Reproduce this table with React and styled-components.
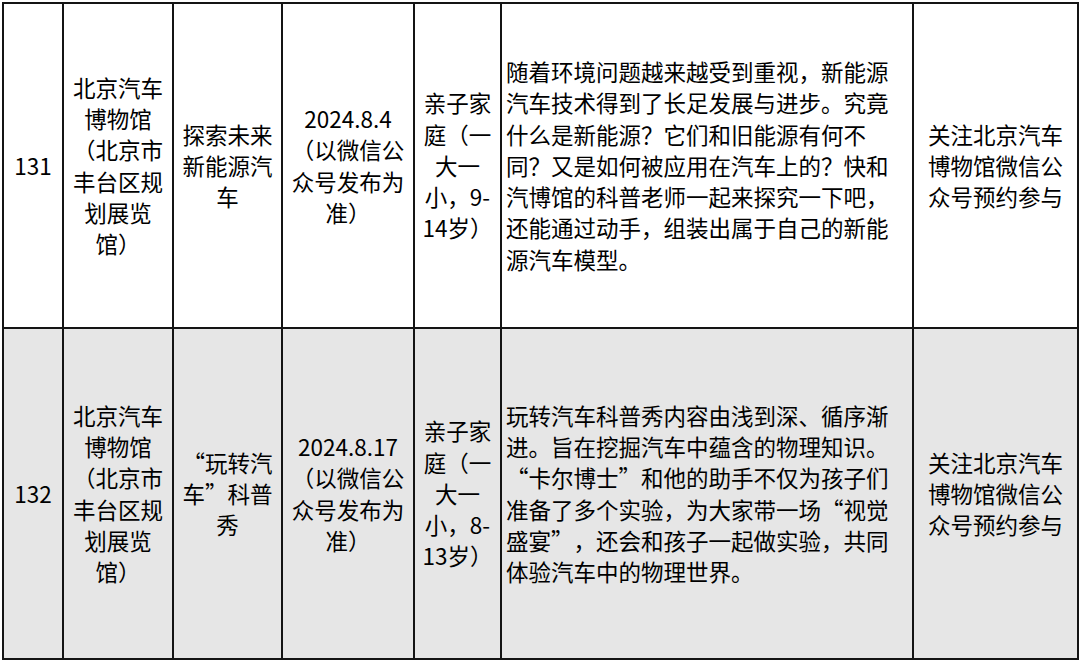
import React from "react";
import styled, { createGlobalStyle } from "styled-components";

const GlobalStyle = createGlobalStyle`
  html, body {
    margin: 0;
    padding: 0;
    background: #fff;
  }
  body {
    font-family: "Noto Sans CJK SC", "Noto Sans", sans-serif;
    color: #000;
  }
`;

const Page = styled.div`
  padding: 2px 0 0 2px;
`;

const Table = styled.table`
  border-collapse: collapse;
  table-layout: fixed;
  width: 1077px;
  font-size: 22.5px;
  line-height: 31.2px;
  text-spacing-trim: space-all;
`;

const Row = styled.tr`
  height: ${({ $height }) => $height}px;
  background: ${({ $shaded }) => ($shaded ? "#e6e6e6" : "#fff")};
`;

const Cell = styled.td`
  border: 2px solid #141414;
  padding: 0 4px;
  vertical-align: middle;
  text-align: ${({ $align }) => $align || "center"};
  word-break: normal;
  overflow-wrap: normal;
`;

const columns = [60, 110, 109, 132, 87, 412, 165];

const rows = [
  {
    no: "131",
    venue: "北京汽车博物馆（北京市丰台区规划展览馆）",
    title: "探索未来新能源汽车",
    date: "2024.8.4",
    dateNote: "（以微信公众号发布为准）",
    audience: "亲子家庭（一大一小，9-14岁）",
    intro:
      "随着环境问题越来越受到重视，新能源汽车技术得到了长足发展与进步。究竟什么是新能源？它们和旧能源有何不同？又是如何被应用在汽车上的？快和汽博馆的科普老师一起来探究一下吧，还能通过动手，组装出属于自己的新能源汽车模型。",
    signup: "关注北京汽车博物馆微信公众号预约参与",
    height: 325,
  },
  {
    no: "132",
    venue: "北京汽车博物馆（北京市丰台区规划展览馆）",
    title: "“玩转汽车”科普秀",
    date: "2024.8.17",
    dateNote: "（以微信公众号发布为准）",
    audience: "亲子家庭（一大一小，8-13岁）",
    intro:
      "玩转汽车科普秀内容由浅到深、循序渐进。旨在挖掘汽车中蕴含的物理知识。“卡尔博士”和他的助手不仅为孩子们准备了多个实验，为大家带一场“视觉盛宴”，还会和孩子一起做实验，共同体验汽车中的物理世界。",
    signup: "关注北京汽车博物馆微信公众号预约参与",
    height: 331,
    shaded: true,
  },
];

export default function App() {
  return (
    <>
      <GlobalStyle />
      <Page>
        <Table lang="zh-CN">
          <colgroup>
            {columns.map((w, i) => (
              <col key={i} style={{ width: w }} />
            ))}
          </colgroup>
          <tbody>
            {rows.map((r) => (
              <Row key={r.no} $height={r.height} $shaded={r.shaded}>
                <Cell>{r.no}</Cell>
                <Cell>{r.venue}</Cell>
                <Cell>{r.title}</Cell>
                <Cell>
                  {r.date}
                  <br />
                  {r.dateNote}
                </Cell>
                <Cell>{r.audience}</Cell>
                <Cell $align="left">{r.intro}</Cell>
                <Cell>{r.signup}</Cell>
              </Row>
            ))}
          </tbody>
        </Table>
      </Page>
    </>
  );
}
